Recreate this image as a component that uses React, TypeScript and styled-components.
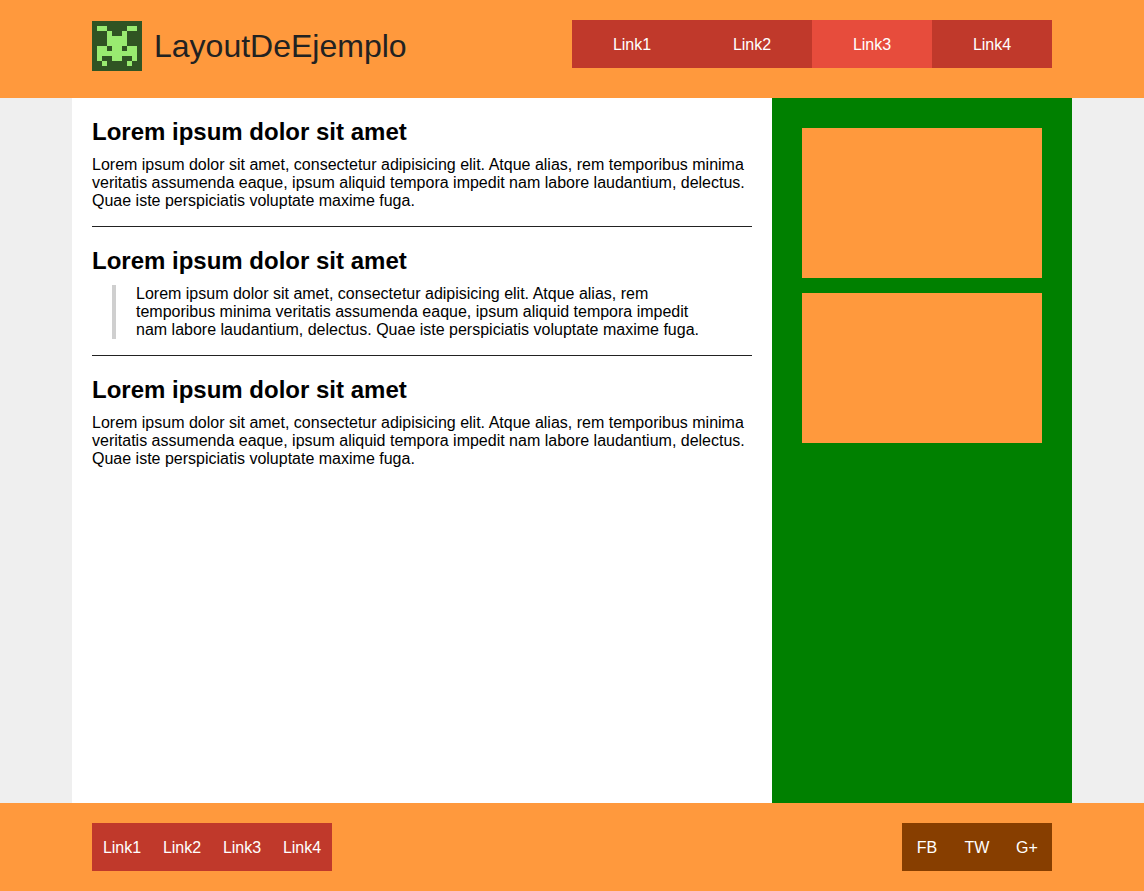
import React from "react";
import styled, { createGlobalStyle } from "styled-components";

const color = {
  orange: "#ff993d",
  red: "#c0392b",
  redActive: "#e74c3c",
  brown: "#873e00",
  green: "#008000",
  ink: "#222222",
};

const GlobalStyle = createGlobalStyle`
  *, *::before, *::after { box-sizing: border-box; }
  body {
    margin: 0;
    background: #efefef;
    color: #000000;
    font-family: Arial, "Liberation Sans", sans-serif;
    font-size: 16px;
    line-height: 18px;
  }
`;

const Page = styled.div`
  display: flex;
  flex-direction: column;
  min-height: 100vh;
`;

const Container = styled.div`
  display: flex;
  justify-content: space-between;
  align-items: flex-start;
  width: 100%;
  max-width: 1000px;
  margin: 0 auto;
  padding: 0 20px;
`;

const Header = styled.header`
  background: ${color.orange};
  padding: 20px 0 26px;
`;

const Footer = styled.footer`
  background: ${color.orange};
  padding: 20px 0;
`;

const Brand = styled.div`
  display: flex;
  align-items: center;
  gap: 12px;
  height: 52px;
`;

const Logo = styled.svg`
  display: block;
  width: 50px;
  height: 50px;
`;

const Title = styled.h1`
  margin: 0;
  color: ${color.ink};
  font-size: 32px;
  font-weight: 400;
  line-height: 36px;
`;

const Menu = styled.ul<{ $color: string }>`
  display: flex;
  margin: 0;
  padding: 0;
  list-style: none;
  background: ${(p) => p.$color};
`;

const MenuLink = styled.a<{ $width: number; $active?: boolean }>`
  display: block;
  width: ${(p) => p.$width}px;
  padding: 16px 0 14px;
  background: ${(p) => (p.$active ? color.redActive : "transparent")};
  color: #ffffff;
  text-align: center;
  text-decoration: none;
`;

const Body = styled.div`
  display: flex;
  flex: 1;
  width: 100%;
  max-width: 1000px;
  margin: 0 auto;
  background: #ffffff;
`;

const Main = styled.main`
  flex: 1;
  min-width: 0;
  padding: 0 20px;
`;

const Article = styled.article`
  padding: 20px 0 16px;
  border-bottom: 1px solid ${color.ink};

  &:last-child {
    border-bottom: 0;
  }
`;

const Heading = styled.h2`
  margin: 0 0 10px;
  font-size: 24px;
  line-height: 28px;
`;

const Text = styled.p`
  margin: 0;
`;

const Quote = styled.blockquote`
  margin: 0 20px;
  padding: 0 20px;
  border-left: 4px solid #cfcfcf;
`;

const Sidebar = styled.aside`
  display: flex;
  flex-direction: column;
  gap: 15px;
  width: 300px;
  padding: 30px;
  background: ${color.green};
`;

const Banner = styled.div`
  height: 150px;
  background: ${color.orange};
`;

const lorem =
  "Lorem ipsum dolor sit amet, consectetur adipisicing elit. Atque alias, rem temporibus minima veritatis assumenda eaque, ipsum aliquid tempora impedit nam labore laudantium, delectus. Quae iste perspiciatis voluptate maxime fuga.";

const articles = [{ quote: false }, { quote: true }, { quote: false }];
const links = ["Link1", "Link2", "Link3", "Link4"];
const social = ["FB", "TW", "G+"];

type NavProps = {
  label: string;
  items: string[];
  background: string;
  itemWidth: number;
  active?: string;
};

function Nav({ label, items, background, itemWidth, active }: NavProps) {
  return (
    <nav aria-label={label}>
      <Menu $color={background}>
        {items.map((item) => (
          <li key={item}>
            <MenuLink href="#" $width={itemWidth} $active={item === active}>
              {item}
            </MenuLink>
          </li>
        ))}
      </Menu>
    </nav>
  );
}

function InvaderLogo() {
  return (
    <Logo viewBox="0 0 10 10" shapeRendering="crispEdges" aria-hidden="true">
      <path fill="#305423" d="M0 0h10v10H0z" />
      <path
        fill="#99eb70"
        d="M1 1h2v1H1zM7 1h2v1H7zM3 2h1v1H3zM6 2h1v1H6zM3 3h4v2H3zM1 5h2v1H1zM4 5h2v1H4zM7 5h2v1H7zM1 6h8v1H1zM1 7h1v1H1zM4 7h2v1H4zM8 7h1v1H8zM2 8h1v1H2zM7 8h1v1H7z"
      />
    </Logo>
  );
}

export default function App() {
  return (
    <Page>
      <GlobalStyle />
      <Header>
        <Container>
          <Brand>
            <InvaderLogo />
            <Title>LayoutDeEjemplo</Title>
          </Brand>
          <Nav label="Principal" items={links} background={color.red} itemWidth={120} active="Link3" />
        </Container>
      </Header>
      <Body>
        <Main>
          {articles.map(({ quote }, i) => (
            <Article key={i}>
              <Heading>Lorem ipsum dolor sit amet</Heading>
              {quote ? <Quote>{lorem}</Quote> : <Text>{lorem}</Text>}
            </Article>
          ))}
        </Main>
        <Sidebar>
          <Banner />
          <Banner />
        </Sidebar>
      </Body>
      <Footer>
        <Container>
          <Nav label="Pie" items={links} background={color.red} itemWidth={60} />
          <Nav label="Redes" items={social} background={color.brown} itemWidth={50} />
        </Container>
      </Footer>
    </Page>
  );
}
